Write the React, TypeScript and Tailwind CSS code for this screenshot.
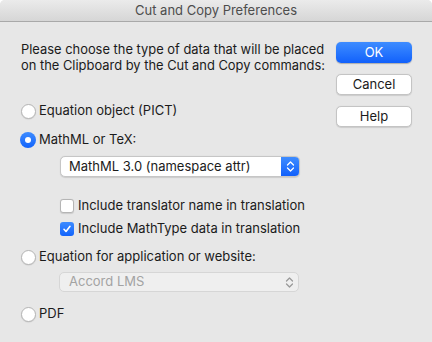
import React from "react"

// Cut and Copy Preferences — macOS style dialog

const font = { fontFamily: 'Inter, "Liberation Sans", Arial, sans-serif' }

function Radio({ checked, label }: { checked?: boolean; label: string }) {
  return (
    <div className="flex items-center h-4">
      {checked ? (
        <div className="w-[16px] h-[16px] -ml-[1px] rounded-full bg-gradient-to-b from-[#3d8bff] to-[#1263fb] flex items-center justify-center">
          <div className="w-[6px] h-[6px] rounded-full bg-white" />
        </div>
      ) : (
        <div className="w-[15px] h-[15px] rounded-full bg-white border border-[#b5b5b5] shadow-[0_0.5px_1px_rgba(0,0,0,0.12)]" />
      )}
      <span className="ml-[3px] text-[13px] text-[#1b1b1b]">{label}</span>
    </div>
  )
}

function Checkbox({ checked, label }: { checked?: boolean; label: string }) {
  return (
    <div className="flex items-center h-4">
      {checked ? (
        <div className="w-[14px] h-[14px] rounded-[3px] bg-gradient-to-b from-[#3d8bff] to-[#1263fb] flex items-center justify-center">
          <svg width="10" height="10" viewBox="0 0 10 10">
            <path d="M2 5.3 L4 7.5 L8 2.3" fill="none" stroke="white" strokeWidth="1.6" strokeLinecap="round" strokeLinejoin="round" />
          </svg>
        </div>
      ) : (
        <div className="w-[14px] h-[14px] rounded-[3px] bg-white border border-[#b5b5b5] shadow-[0_0.5px_1px_rgba(0,0,0,0.12)]" />
      )}
      <span className="ml-[4px] text-[13px] text-[#1b1b1b]">{label}</span>
    </div>
  )
}

function Chevrons({ color }: { color: string }) {
  return (
    <svg width="9" height="13" viewBox="0 0 9 13">
      <path d="M1.5 5 L4.5 2 L7.5 5" fill="none" stroke={color} strokeWidth="1.3" strokeLinecap="round" strokeLinejoin="round" />
      <path d="M1.5 8 L4.5 11 L7.5 8" fill="none" stroke={color} strokeWidth="1.3" strokeLinecap="round" strokeLinejoin="round" />
    </svg>
  )
}

function Button({ label, primary }: { label: string; primary?: boolean }) {
  return primary ? (
    <div className="h-[21px] rounded-[5px] bg-gradient-to-b from-[#3e8cff] to-[#1160fb] flex items-center justify-center text-white text-[13px] shadow-[0_0.5px_1px_rgba(0,0,0,0.25)]">
      {label}
    </div>
  ) : (
    <div className="h-[21px] rounded-[5px] bg-white border border-[#c4c4c4] flex items-center justify-center text-[#1b1b1b] text-[13px] shadow-[0_0.5px_1px_rgba(0,0,0,0.12)]">
      {label}
    </div>
  )
}

export default function App() {
  return (
    <div style={font} className="w-[432px] h-[342px] bg-[#e7e7e7] flex flex-col overflow-hidden rounded-t-[5px]">
      <div className="h-[22px] shrink-0 bg-gradient-to-b from-[#ebebeb] to-[#d6d6d6] border-b border-[#a9a9a9] flex items-center justify-center text-[13px] text-[#4d4d4d]">
        Cut and Copy Preferences
      </div>

      <div className="flex flex-1">
        <div className="flex-1 pl-[21px] pt-[20px] flex flex-col">
          <p className="text-[12.9px] leading-4 text-[#1b1b1b]">
            Please choose the type of data that will be placed
            <br />
            on the Clipboard by the Cut and Copy commands:
          </p>

          <div className="mt-[29px]">
            <Radio label="Equation object (PICT)" />
          </div>
          <div className="mt-[13px]">
            <Radio checked label="MathML or TeX:" />
          </div>

          <div className="mt-[8px] ml-[39px] w-[240px] h-[21px] rounded-[5px] bg-white border border-[#c6c6c6] flex items-stretch shadow-[0_0.5px_1px_rgba(0,0,0,0.12)] overflow-hidden">
            <span className="flex-1 pl-[8px] flex items-center text-[13px] text-[#1b1b1b]">MathML 3.0 (namespace attr)</span>
            <div className="w-[18px] bg-gradient-to-b from-[#3e8cff] to-[#1160fb] flex items-center justify-center">
              <Chevrons color="#ffffff" />
            </div>
          </div>

          <div className="mt-[21px] ml-[39px]">
            <Checkbox label="Include translator name in translation" />
          </div>
          <div className="mt-[7px] ml-[39px]">
            <Checkbox checked label="Include MathType data in translation" />
          </div>

          <div className="mt-[12px]">
            <Radio label="Equation for application or website:" />
          </div>

          <div className="mt-[7px] ml-[38px] w-[240px] h-[20px] rounded-[5px] bg-[#efefef] border border-[#d6d6d6] flex items-center">
            <span className="flex-1 pl-[9px] text-[13px] text-[#a3a3a3]">Accord LMS</span>
            <div className="w-[18px] flex items-center justify-center">
              <Chevrons color="#9a9a9a" />
            </div>
          </div>

          <div className="mt-[14px]">
            <Radio label="PDF" />
          </div>
        </div>

        <div className="w-[76px] mr-[20px] pt-[20px] flex flex-col gap-[11px]">
          <Button primary label="OK" />
          <Button label="Cancel" />
          <Button label="Help" />
        </div>
      </div>
    </div>
  )
}
